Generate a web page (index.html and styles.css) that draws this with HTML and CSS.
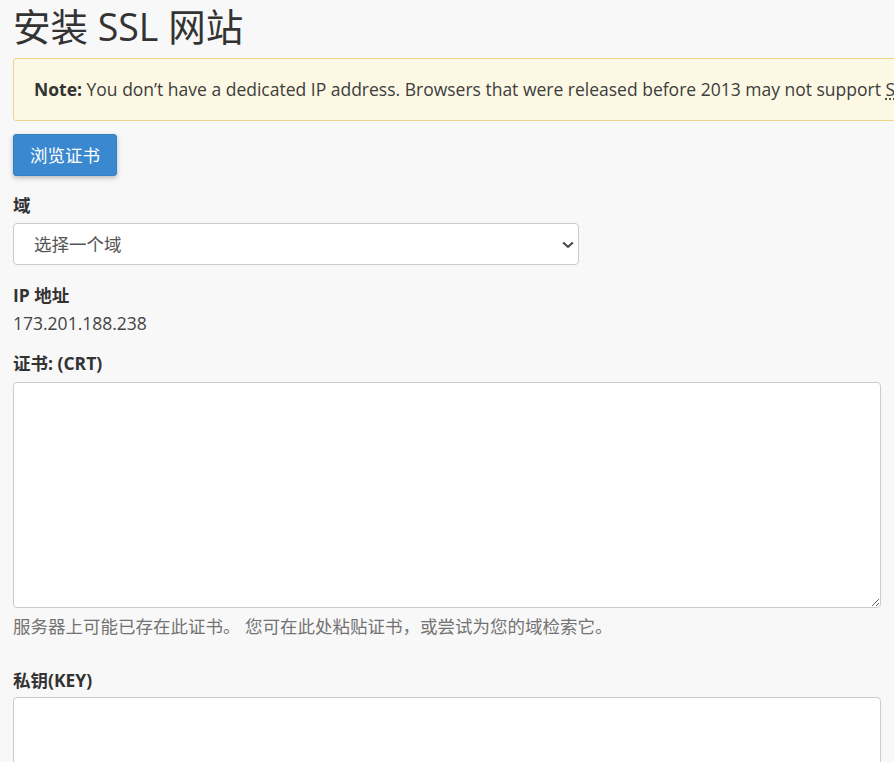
FILE: index.html
```html
<!DOCTYPE html>
<html lang="zh-CN">
<head>
<meta charset="utf-8">
<title>安装 SSL 网站</title>
<link rel="stylesheet" href="styles.css">
</head>
<body>
<div class="page">
  <h1 class="title">安装 SSL 网站</h1>
  <div class="note"><strong>Note:</strong> You don’t have a dedicated IP address. Browsers that were released before 2013 may not support <abbr title="Server Name Indication">SNI</abbr>. For more information, read our documentation.</div>
  <button class="btn" type="button">浏览证书</button>

  <label class="lbl lbl-domain" for="domain">域</label>
  <div class="select-wrap">
    <select id="domain" class="select">
      <option>选择一个域</option>
    </select>
    <svg class="chev" width="12" height="8" viewBox="0 0 12 8"><path d="M1.2 1.5 L6 6 L10.8 1.5" fill="none" stroke="#444" stroke-width="2"/></svg>
  </div>

  <div class="lbl lbl-ip">IP 地址</div>
  <div class="value">173.201.188.238</div>

  <label class="lbl lbl-crt" for="crt">证书: (CRT)</label>
  <textarea id="crt" class="area area-crt"></textarea>
  <div class="help">服务器上可能已存在此证书。 您可在此处粘贴证书，或尝试为您的域检索它。</div>

  <label class="lbl lbl-key" for="key">私钥(KEY)</label>
  <textarea id="key" class="area area-key"></textarea>
</div>
</body>
</html>
```

FILE: styles.css
```css
html, body {
  margin: 0;
  padding: 0;
  overflow: hidden;
  background: #f8f8f8;
}
body {
  font-family: "Open Sans", "Noto Sans CJK SC", sans-serif;
  font-size: 17.5px;
  color: #333;
}
.page {
  padding: 0 13px;
  display: flex;
  flex-direction: column;
  align-items: flex-start;
}
.title {
  margin: 5px 0 9px;
  font-size: 37.5px;
  font-weight: 400;
  line-height: 44px;
  color: #333;
}
.note {
  box-sizing: border-box;
  width: 1000px;
  flex-shrink: 0;
  background: #fcf8e3;
  border: 1px solid #ecd68a;
  border-radius: 3px;
  padding: 19px 20px;
  line-height: 23px;
  white-space: nowrap;
  color: #3d3d3d;
}
.note strong { font-weight: 700; color: #333; }
.note abbr {
  text-decoration: underline dotted;
  text-underline-offset: 3px;
}
.btn {
  margin-top: 13px;
  font-family: inherit;
  font-size: 17.5px;
  line-height: 22px;
  color: #fff;
  background: #3a89d0;
  border: 1px solid #3580c3;
  border-radius: 3px;
  padding: 9px 16px;
  box-shadow: 0 2px 5px rgba(0,0,0,0.25);
  cursor: pointer;
}
.lbl {
  display: block;
  font-weight: 700;
  line-height: 22px;
}
.lbl-domain { margin-top: 18px; }
.select-wrap {
  position: relative;
  margin-top: 7px;
  width: 566px;
}
.select {
  appearance: none;
  -webkit-appearance: none;
  box-sizing: border-box;
  width: 566px;
  height: 42px;
  padding: 0 20px;
  font-family: inherit;
  font-size: 17.5px;
  color: #555;
  background: #fff;
  border: 1px solid #ccc;
  border-radius: 4px;
}
.chev {
  position: absolute;
  right: 5px;
  top: 18px;
  pointer-events: none;
}
.lbl-ip { margin-top: 19px; }
.value {
  margin-top: 6px;
  line-height: 22px;
  color: #444;
}
.lbl-crt { margin-top: 18px; }
.area {
  box-sizing: border-box;
  width: 868px;
  background: #fff;
  border: 1px solid #ccc;
  border-radius: 4px;
  font-family: inherit;
  font-size: 16px;
}
.area-crt {
  margin-top: 8px;
  height: 226px;
}
.help {
  margin-top: 7px;
  line-height: 22px;
  font-size: 17.5px;
  color: #737373;
}
.lbl-key { margin-top: 32px; }
.area-key {
  margin-top: 6px;
  height: 120px;
}
```
